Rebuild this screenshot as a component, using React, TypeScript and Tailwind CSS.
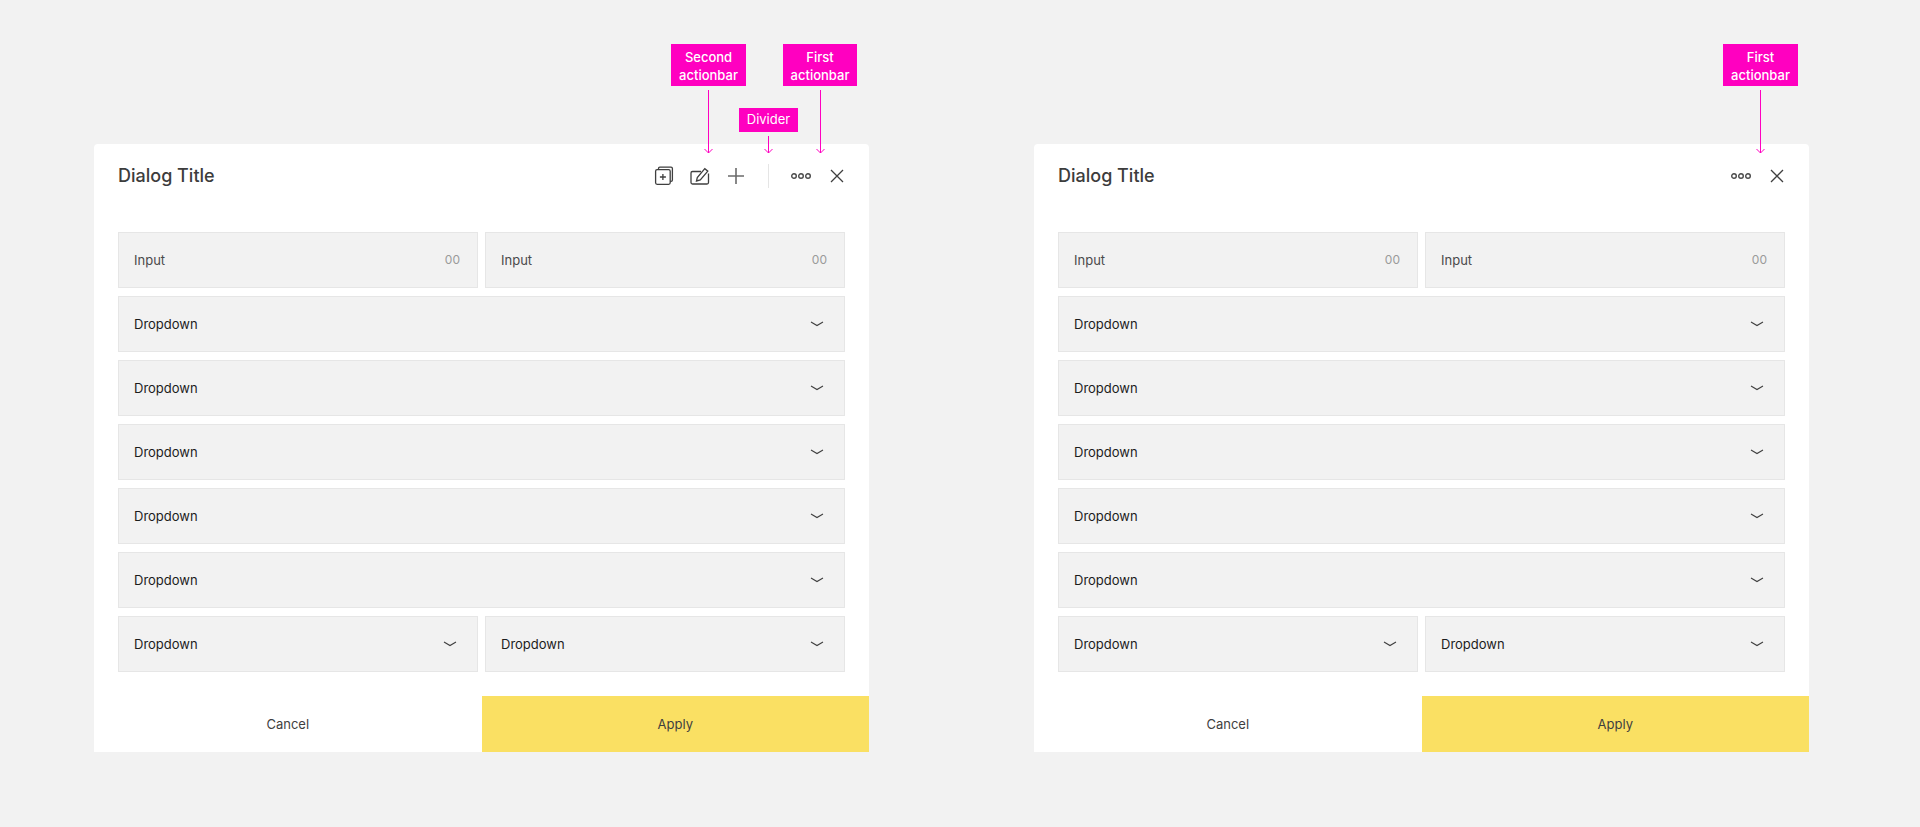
import React from "react";

const Chevron = () => (
  <svg width="14" height="6" viewBox="0 0 14 6" fill="none" className="shrink-0">
    <path d="M1 1 L7 4.5 L13 1" stroke="#3f3f3f" strokeWidth="1.1" />
  </svg>
);

const InputField = () => (
  <div className="flex h-14 w-[360px] items-center justify-between border border-[#e6e6e6] bg-[#f2f2f2] pl-[15px] pr-[17px]">
    <span className="pt-[2px] text-[13px] text-[#4a4a4a]">Input</span>
    <span className="text-[12px] text-[#9a9a9a]">00</span>
  </div>
);

const Dropdown = ({ half }: { half?: boolean }) => (
  <div
    className={
      half
        ? "flex h-14 w-[360px] items-center justify-between border border-[#e6e6e6] bg-[#f2f2f2] pl-[15px] pr-[20px]"
        : "flex h-14 w-full items-center justify-between border border-[#e6e6e6] bg-[#f2f2f2] pl-[15px] pr-[20px]"
    }
  >
    <span className="pt-[2px] text-[13px] text-[#1c1c1c]">Dropdown</span>
    <Chevron />
  </div>
);

const CopyPlusIcon = () => (
  <svg width="20" height="20" viewBox="0 0 20 20" fill="none" stroke="#3f3f3f" strokeWidth="1.3">
    <path d="M4.5 3.6 V2.6 a1.4 1.4 0 0 1 1.4 -1.4 H17 a1.4 1.4 0 0 1 1.4 1.4 V14 a1.4 1.4 0 0 1 -1.4 1.4 h-0.8" />
    <rect x="1.6" y="3.7" width="14.6" height="14.6" rx="1.5" />
    <path d="M8.9 8 V14 M5.9 11 H11.9" />
  </svg>
);

const EditIcon = () => (
  <svg width="20" height="20" viewBox="0 0 20 20" fill="none" stroke="#3f3f3f" strokeWidth="1.3">
    <path d="M11 5.5 H2.5 a1.5 1.5 0 0 0 -1.5 1.5 V16.5 a1.5 1.5 0 0 0 1.5 1.5 H17 a1.5 1.5 0 0 0 1.5 -1.5 V7.5" />
    <path d="M6.5 15 L7.3 11.5 L14.8 2.7 L17.8 5.2 L10.3 14 Z" />
  </svg>
);

const PlusIcon = () => (
  <svg width="18" height="18" viewBox="0 0 18 18" fill="none" stroke="#6b6b6b" strokeWidth="1.6">
    <path d="M9 1 V17 M1 9 H17" />
  </svg>
);

const DotsIcon = () => (
  <svg width="20" height="6" viewBox="0 0 20 6" fill="none" stroke="#4a4a4a" strokeWidth="1.4">
    <circle cx="3" cy="3" r="2.3" />
    <circle cx="10" cy="3" r="2.3" />
    <circle cx="17" cy="3" r="2.3" />
  </svg>
);

const CloseIcon = () => (
  <svg width="14" height="14" viewBox="0 0 14 14" fill="none" stroke="#3f3f3f" strokeWidth="1.3">
    <path d="M1 1 L13 13 M13 1 L1 13" />
  </svg>
);

const Dialog = ({ secondBar }: { secondBar?: boolean }) => (
  <div className="flex h-[608px] w-[775px] flex-col rounded-t-[4px] bg-white">
    <div className="flex h-[88px] items-center justify-between px-6 pb-[24px]">
      <h2 className="text-[18px] font-[550] leading-none text-[#3c3c3c]">Dialog Title</h2>
      <div className="flex items-center">
        {secondBar && (
          <>
            <div className="mr-[16px]"><CopyPlusIcon /></div>
            <div className="mr-[17px]"><EditIcon /></div>
            <div className="mr-[23px]"><PlusIcon /></div>
            <div className="mr-[22px] h-6 w-px bg-[#e5e5e5]" />
          </>
        )}
        <div className="mr-[19px]"><DotsIcon /></div>
        <div className="mr-[1px]"><CloseIcon /></div>
      </div>
    </div>
    <div className="flex flex-col gap-2 px-6">
      <div className="flex gap-[7px]">
        <InputField />
        <InputField />
      </div>
      <Dropdown />
      <Dropdown />
      <Dropdown />
      <Dropdown />
      <Dropdown />
      <div className="flex gap-[7px]">
        <Dropdown half />
        <Dropdown half />
      </div>
    </div>
    <div className="mt-6 flex h-14">
      <button className="flex-1 pt-[2px] text-[13px] text-[#3f3f3f]">Cancel</button>
      <button className="flex-1 bg-[#fae063] pt-[2px] text-[13px] text-[#3f3f3f]">Apply</button>
    </div>
  </div>
);

const ArrowHead = () => (
  <svg width="9" height="6" viewBox="0 0 9 6" fill="none" stroke="#ff00c0" strokeWidth="1" className="absolute -bottom-px left-[-4px]">
    <path d="M0.5 1 L4.5 5 L8.5 1" />
  </svg>
);

export default function App() {
  return (
    <div className="relative flex min-h-[827px] gap-[165px] bg-[#f2f2f2] pl-[94px] pt-[144px] font-['Inter',sans-serif]">
      <Dialog secondBar />
      <Dialog />

      <div className="absolute left-[671px] top-[44px] flex h-[42px] w-[75px] items-center justify-center bg-[#ff00c0] pt-[2px] text-center text-[13px] font-medium leading-[18px] text-white">
        Second<br />actionbar
      </div>
      <div className="absolute left-[783px] top-[44px] flex h-[42px] w-[74px] items-center justify-center bg-[#ff00c0] pt-[2px] text-center text-[13px] font-medium leading-[18px] text-white">
        First<br />actionbar
      </div>
      <div className="absolute left-[739px] top-[108px] flex h-6 w-[59px] items-center justify-center bg-[#ff00c0] text-[13px] text-white">
        Divider
      </div>
      <div className="absolute left-[1723px] top-[44px] flex h-[42px] w-[75px] items-center justify-center bg-[#ff00c0] pt-[2px] text-center text-[13px] font-medium leading-[18px] text-white">
        First<br />actionbar
      </div>

      <div className="absolute left-[708px] top-[90px] h-[63px] w-px bg-[#ff00c0]"><ArrowHead /></div>
      <div className="absolute left-[768px] top-[136px] h-[17px] w-px bg-[#ff00c0]"><ArrowHead /></div>
      <div className="absolute left-[820px] top-[90px] h-[63px] w-px bg-[#ff00c0]"><ArrowHead /></div>
      <div className="absolute left-[1760px] top-[90px] h-[63px] w-px bg-[#ff00c0]"><ArrowHead /></div>
    </div>
  );
}
